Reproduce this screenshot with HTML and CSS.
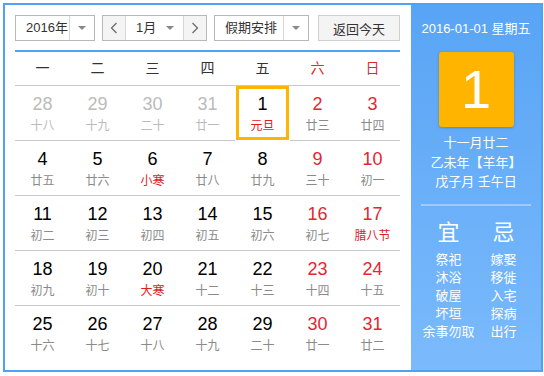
FILE: index.html
```html
<!DOCTYPE html>
<html>
<head>
	<title>万年历</title>
	<link rel="stylesheet" href="styles.css">
</head>
<body>
	<div class="calendar">
		<div class="main">
			<div class="toolbar">
				<div class="select year">
					<span class="select-text">2016年</span>
					<span class="select-arrow"><i class="caret"></i></span>
				</div>
				<div class="select month">
					<span class="nav-btn"><svg width="8" height="12" viewBox="0 0 8 12"><polyline points="6.5,1 1.5,6 6.5,11" fill="none" stroke="#666" stroke-width="1.2"/></svg></span>
					<span class="month-text">1月 <i class="caret"></i></span>
					<span class="nav-btn"><svg width="8" height="12" viewBox="0 0 8 12"><polyline points="1.5,1 6.5,6 1.5,11" fill="none" stroke="#666" stroke-width="1.2"/></svg></span>
				</div>
				<div class="select holiday">
					<span class="select-text">假期安排</span>
					<span class="select-arrow"><i class="caret"></i></span>
				</div>
				<button class="today-btn">返回今天</button>
			</div>

			<div class="week-head">
				<span>一</span><span>二</span><span>三</span><span>四</span><span>五</span><span class="red">六</span><span class="red">日</span>
			</div>

			<div class="days">
				<div class="day other"><b>28</b><em>十八</em></div>
				<div class="day other"><b>29</b><em>十九</em></div>
				<div class="day other"><b>30</b><em>二十</em></div>
				<div class="day other"><b>31</b><em>廿一</em></div>
				<div class="day today"><b>1</b><em class="fest">元旦</em></div>
				<div class="day weekend"><b>2</b><em>廿三</em></div>
				<div class="day weekend"><b>3</b><em>廿四</em></div>

				<div class="day"><b>4</b><em>廿五</em></div>
				<div class="day"><b>5</b><em>廿六</em></div>
				<div class="day"><b>6</b><em class="fest">小寒</em></div>
				<div class="day"><b>7</b><em>廿八</em></div>
				<div class="day"><b>8</b><em>廿九</em></div>
				<div class="day weekend"><b>9</b><em>三十</em></div>
				<div class="day weekend"><b>10</b><em>初一</em></div>

				<div class="day"><b>11</b><em>初二</em></div>
				<div class="day"><b>12</b><em>初三</em></div>
				<div class="day"><b>13</b><em>初四</em></div>
				<div class="day"><b>14</b><em>初五</em></div>
				<div class="day"><b>15</b><em>初六</em></div>
				<div class="day weekend"><b>16</b><em>初七</em></div>
				<div class="day weekend"><b>17</b><em class="fest">腊八节</em></div>

				<div class="day"><b>18</b><em>初九</em></div>
				<div class="day"><b>19</b><em>初十</em></div>
				<div class="day"><b>20</b><em class="fest">大寒</em></div>
				<div class="day"><b>21</b><em>十二</em></div>
				<div class="day"><b>22</b><em>十三</em></div>
				<div class="day weekend"><b>23</b><em>十四</em></div>
				<div class="day weekend"><b>24</b><em>十五</em></div>

				<div class="day last"><b>25</b><em>十六</em></div>
				<div class="day last"><b>26</b><em>十七</em></div>
				<div class="day last"><b>27</b><em>十八</em></div>
				<div class="day last"><b>28</b><em>十九</em></div>
				<div class="day last"><b>29</b><em>二十</em></div>
				<div class="day last weekend"><b>30</b><em>廿一</em></div>
				<div class="day last weekend"><b>31</b><em>廿二</em></div>
			</div>
		</div>

		<div class="side">
			<div class="side-date">2016-01-01 星期五</div>
			<div class="big-day">1</div>
			<div class="lunar">
				<p>十一月廿二</p>
				<p>乙未年【羊年】</p>
				<p>戊子月 壬午日</p>
			</div>
			<div class="divider"></div>
			<div class="almanac">
				<div class="almanac-col">
					<h3>宜</h3>
					<p>祭祀</p>
					<p>沐浴</p>
					<p>破屋</p>
					<p>坏垣</p>
					<p>余事勿取</p>
				</div>
				<div class="almanac-col">
					<h3>忌</h3>
					<p>嫁娶</p>
					<p>移徙</p>
					<p>入宅</p>
					<p>探病</p>
					<p>出行</p>
				</div>
			</div>
		</div>
	</div>
</body>
</html>
```

FILE: styles.css
```css
body {
	margin: 0;
	padding: 0;
	overflow: hidden;
	background-color: #fff;
	font-family: "Liberation Sans", Arial, "Noto Sans CJK SC", sans-serif;
	color: #000;
}

.calendar {
	display: flex;
	width: 540px;
	height: 369px;
	margin: 3px 0 0 3px;
	border: 2px solid #4fa2f2;
	box-sizing: border-box;
}

.main {
	width: 406px;
	padding: 10px 11px 0 10px;
	box-sizing: border-box;
}

/* toolbar */
.toolbar {
	display: flex;
	height: 26px;
	margin-bottom: 9px;
}

.select {
	display: flex;
	height: 26px;
	border: 1px solid #b8b8b8;
	box-sizing: border-box;
	font-size: 13px;
	color: #333;
}

.select-text {
	flex: 1;
	line-height: 24px;
	padding-left: 10px;
}

.select-arrow {
	width: 24px;
	border-left: 1px solid #d6d6d6;
	display: flex;
	align-items: center;
	justify-content: center;
}

.caret {
	display: inline-block;
	width: 0;
	height: 0;
	border-left: 4px solid transparent;
	border-right: 4px solid transparent;
	border-top: 4px solid #888;
}

.year {
	width: 80px;
	margin-right: 7px;
}

.month {
	width: 105px;
	margin-right: 7px;
}

.nav-btn {
	width: 22px;
	display: flex;
	align-items: center;
	justify-content: center;
	background-color: #f4f4f4;
}

.month-text {
	flex: 1;
	display: flex;
	align-items: center;
	justify-content: space-between;
	padding: 0 9px 0 10px;
	border-left: 1px solid #d6d6d6;
	border-right: 1px solid #d6d6d6;
	line-height: 24px;
}

.holiday {
	width: 95px;
	margin-right: 9px;
}

.today-btn {
	width: 82px;
	height: 26px;
	padding: 0;
	border: 1px solid #cfcfcf;
	background-color: #f4f4f4;
	font-family: inherit;
	font-size: 13px;
	color: #333;
}

/* grid */
.week-head {
	display: grid;
	grid-template-columns: repeat(7, 55px);
	height: 33px;
	border-top: 2px solid #4fa2f2;
	border-bottom: 1px solid #c8c8c8;
	font-size: 14px;
	color: #333;
}

.week-head span {
	text-align: center;
	line-height: 33px;
}

.week-head .red {
	color: #e5262f;
}

.days {
	display: grid;
	grid-template-columns: repeat(7, 55px);
	grid-auto-rows: 55px;
}

.day {
	border-bottom: 1px solid #c8c8c8;
	text-align: center;
	padding-top: 7px;
	box-sizing: border-box;
}

.day.last {
	border-bottom: none;
}

.day b {
	display: block;
	font-weight: normal;
	font-size: 18px;
	line-height: 22px;
}

.day em {
	display: block;
	font-style: normal;
	font-size: 12px;
	line-height: 16px;
	margin-top: 3px;
	color: #8a8a8a;
}

.day.other b,
.day.other em {
	color: #bbb;
}

.day.weekend b {
	color: #e5262f;
}

.day em.fest {
	color: #e0201f;
}

.day.today {
	border: 3px solid #ffb400;
	margin: 0 1px 1px 1px;
	padding-top: 4px;
}

/* side panel */
.side {
	width: 130px;
	padding: 0 10px;
	box-sizing: border-box;
	background: linear-gradient(#58a4f5, #7bbafc);
	color: #fff;
	text-align: center;
}

.side-date {
	font-size: 13px;
	margin-top: 16px;
	line-height: 16px;
}

.big-day {
	width: 75px;
	height: 75px;
	margin: 15px auto 0;
	background-color: #ffb400;
	border-radius: 3px;
	box-shadow: 0 1px 3px rgba(0, 0, 0, 0.2);
	font-size: 54px;
	line-height: 75px;
}

.lunar {
	margin-top: 6px;
	font-size: 13px;
}

.lunar p {
	margin: 0;
	line-height: 19.5px;
}

.divider {
	height: 2px;
	margin-top: 12px;
	background-color: rgba(255, 255, 255, 0.35);
}

.almanac {
	display: flex;
	margin-top: 13px;
}

.almanac-col {
	width: 55px;
}

.almanac h3 {
	margin: 0 0 4px;
	font-size: 22px;
	font-weight: normal;
	line-height: 28px;
}

.almanac p {
	margin: 0;
	font-size: 13px;
	line-height: 18px;
}
```
